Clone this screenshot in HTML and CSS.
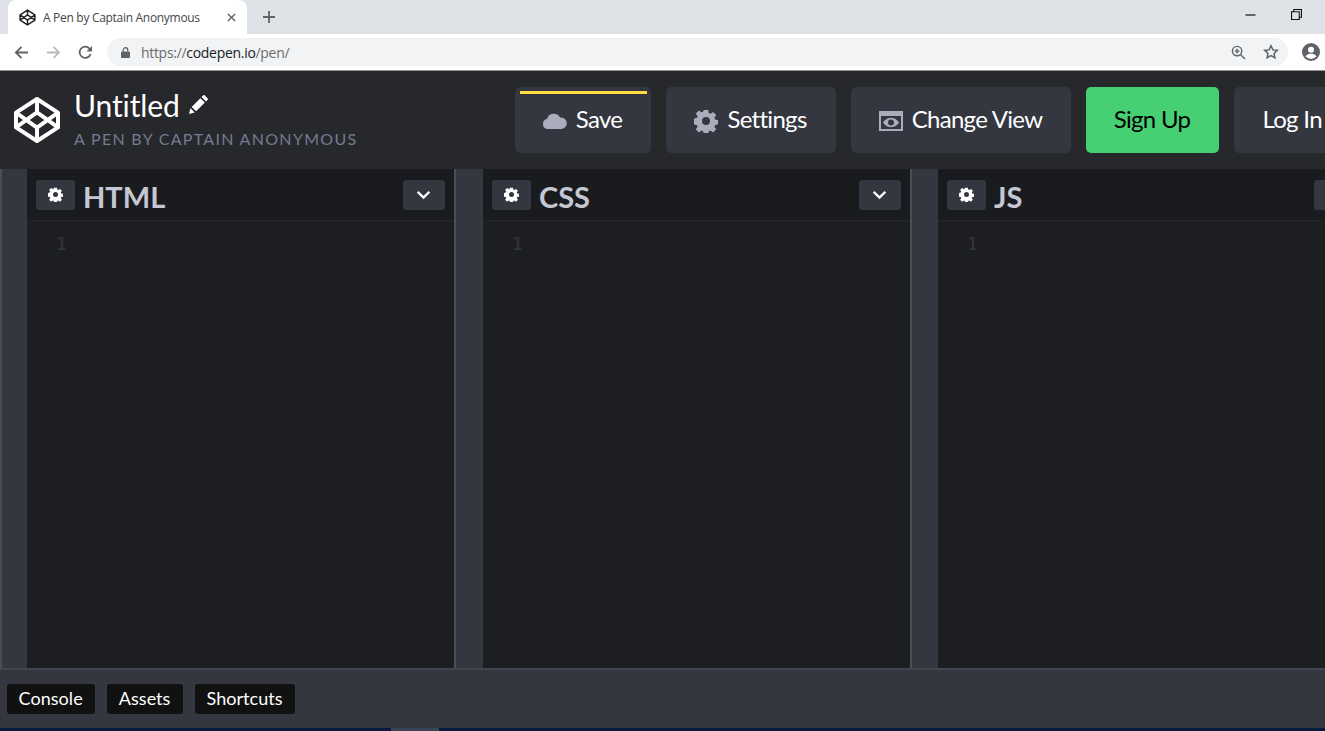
FILE: index.html
```html
<!DOCTYPE html>
<html lang="en">
<head>
<meta charset="utf-8">
<title>A Pen by Captain Anonymous</title>
<link rel="stylesheet" href="styles.css">
</head>
<body>
<svg class="defs" width="0" height="0" aria-hidden="true">
  <defs>
    <symbol id="gear" viewBox="0 0 24 24"><path fill-rule="evenodd" d="M9.800 1h4.400l.6 3.100 1.700.7 2.600-1.800 3.100 3.100-1.800 2.600.7 1.700 3 .6v4.400l-3 .6-.7 1.700 1.800 2.600-3.100 3.100-2.600-1.800-1.700.7-.6 3.100H9.800l-.6-3.100-1.700-.7-2.600 1.800-3.100-3.100 1.800-2.600-.7-1.700-3-.6V9.500l3-.6.7-1.700L1.800 4.600 4.900 1.500l2.600 1.800 1.700-.7zM12 8a4 4 0 1 0 0 8 4 4 0 0 0 0-8z"/></symbol>
    <symbol id="cp" viewBox="0 0 24 24"><path fill="none" stroke="currentColor" stroke-width="2" stroke-linejoin="round" d="M12 1.500 22.500 8.300v7.400L12 22.500 1.500 15.700V8.300zM12 1.500v6.700M12 15.800v6.700M1.500 8.300 12 15.800 22.500 8.300M1.500 15.700 12 8.200l10.500 7.500"/></symbol>
  </defs>
</svg>
<div class="tabstrip">
  <div class="tab">
    <svg class="tab-logo" viewBox="0 0 24 24"><use href="#cp"/></svg>
    <span class="tab-title">A Pen by Captain Anonymous</span>
    <svg class="tab-close" viewBox="0 0 10 10"><path d="M1 1l8 8M9 1l-8 8"/></svg>
  </div>
  <svg class="tab-new" viewBox="0 0 12 12"><path d="M6 0v12M0 6h12"/></svg>
  <div class="win-controls">
    <svg class="win-min" viewBox="0 0 10 2"><path d="M0 1h10"/></svg>
    <svg class="win-restore" viewBox="0 0 10 10"><path d="M0.500 2.500h7v7h-7zM2.500 2.500v-2h7v7h-2"/></svg>
  </div>
</div>
<div class="toolbar">
  <svg class="nav nav-back" viewBox="0 0 16 16"><path d="M15 8H2M8 2 2 8l6 6"/></svg>
  <svg class="nav nav-fwd" viewBox="0 0 16 16"><path d="M1 8h13M8 2l6 6-6 6"/></svg>
  <svg class="nav nav-reload" viewBox="0 0 16 16"><path d="M13.500 9.500A6 6 0 1 1 12.300 3.800L14 5.500"/><path class="solid" d="M15 1v6H9z"/></svg>
  <div class="omnibox">
    <svg class="lock" viewBox="0 0 10 12"><path d="M1 5h8a1 1 0 0 1 1 1v5a1 1 0 0 1-1 1H1a1 1 0 0 1-1-1V6a1 1 0 0 1 1-1z"/><path class="shackle" d="M2.500 5V3.200a2.500 2.500 0 0 1 5 0V5"/></svg>
    <span class="url"><span class="url-dim">https://</span>codepen.io<span class="url-dim">/pen/</span></span>
    <svg class="omni-icon" viewBox="0 0 16 16"><circle cx="6.500" cy="6.500" r="5"/><path d="M10.300 10.300 15 15M4 6.500h5M6.500 4v5"/></svg>
    <svg class="omni-icon omni-star" viewBox="0 0 16 16"><path d="M8 1.800l1.900 4.100 4.400.5-3.300 3 .9 4.400L8 11.600l-3.900 2.200.9-4.400-3.300-3 4.400-.5z"/></svg>
  </div>
  <svg class="avatar" viewBox="0 0 18 18"><circle cx="9" cy="9" r="9" class="av-bg"/><circle cx="9" cy="6.800" r="3" class="av-fg"/><path class="av-fg" d="M3.500 13.200C5 11.300 7 10.800 9 10.800s4 .5 5.500 2.400A7 7 0 0 1 9 16a7 7 0 0 1-5.500-2.800z"/></svg>
</div>
<header class="header">
  <svg class="logo" viewBox="0 0 24 24"><use href="#cp"/></svg>
  <div class="title-block">
    <div class="title-row">
      <span class="title">Untitled</span>
      <svg class="pencil" viewBox="0 0 20 20"><path d="M0 20l1.500-6L6 18.500zM2.800 12.500 12 3.300l4.700 4.700-9.200 9.200zM13.200 2.100 15 .3a1 1 0 0 1 1.400 0l3.300 3.300a1 1 0 0 1 0 1.400L17.900 6.800z"/></svg>
    </div>
    <div class="subtitle">A Pen by Captain Anonymous</div>
  </div>
  <div class="actions">
    <button class="btn btn-save">
      <svg class="btn-icon" viewBox="0 0 24 16"><path d="M5 16a5 5 0 0 1-1-9.900A7 7 0 0 1 17 4.500 5.800 5.800 0 0 1 19 16z"/></svg>Save
    </button>
    <button class="btn btn-settings"><svg class="btn-icon btn-gear"><use href="#gear"/></svg>Settings</button>
    <button class="btn btn-view">
      <svg class="btn-icon btn-eye" viewBox="0 0 24 20"><path fill-rule="evenodd" d="M0 0h24v20H0zM2 5v13h20V5zM12 6.800c4 0 7 3 8 4.700-1 1.800-4 4.700-8 4.700s-7-3-8-4.700c1-1.700 4-4.700 8-4.700zM12 8.500a3 3 0 1 0 0 6 3 3 0 0 0 0-6z"/></svg>Change View
    </button>
    <button class="btn btn-signup">Sign Up</button>
    <button class="btn btn-login">Log In</button>
  </div>
</header>
<main class="editors">
  <section class="col col-first">
    <div class="handle"></div>
    <div class="editor">
      <div class="ed-head">
        <span class="ed-btn ed-gear"><svg class="gear-sm"><use href="#gear"/></svg></span>
        <h2 class="ed-name">HTML</h2>
        <span class="ed-btn ed-chev"><svg class="chev" viewBox="0 0 14 9"><path d="M1.500 1.500 7 7l5.500-5.500"/></svg></span>
      </div>
      <div class="gutter">1</div>
    </div>
  </section>
  <section class="col">
    <div class="handle"></div>
    <div class="editor">
      <div class="ed-head">
        <span class="ed-btn ed-gear"><svg class="gear-sm"><use href="#gear"/></svg></span>
        <h2 class="ed-name">CSS</h2>
        <span class="ed-btn ed-chev"><svg class="chev" viewBox="0 0 14 9"><path d="M1.500 1.500 7 7l5.500-5.500"/></svg></span>
      </div>
      <div class="gutter">1</div>
    </div>
  </section>
  <section class="col col-last">
    <div class="handle"></div>
    <div class="editor">
      <div class="ed-head">
        <span class="ed-btn ed-gear"><svg class="gear-sm"><use href="#gear"/></svg></span>
        <h2 class="ed-name">JS</h2>
        <span class="ed-btn ed-chev"><svg class="chev" viewBox="0 0 14 9"><path d="M1.500 1.500 7 7l5.500-5.500"/></svg></span>
      </div>
      <div class="gutter">1</div>
    </div>
  </section>
</main>
<footer class="footer">
  <button class="foot-btn">Console</button>
  <button class="foot-btn">Assets</button>
  <button class="foot-btn">Shortcuts</button>
</footer>
<div class="taskbar"><span class="taskbar-mark"></span></div>
</body>
</html>
```

FILE: styles.css
```css
* { box-sizing: border-box; }
html, body { margin: 0; height: 100%; }
body {
  width: 1325px;
  height: 731px;
  overflow: hidden;
  display: flex;
  flex-direction: column;
  font-family: Lato, "Liberation Sans", sans-serif;
  background: #26282c;
}
.defs { position: absolute; }

/* Browser chrome */
.tabstrip {
  height: 34px;
  flex: none;
  display: flex;
  align-items: flex-end;
  padding-left: 8px;
  background: #dee1e6;
}
.tab {
  width: 239px;
  height: 34px;
  display: flex;
  align-items: center;
  padding: 0 11px;
  background: #fff;
  border-radius: 8px 8px 0 0;
  color: #45474a;
}
.tab-logo { width: 17px; height: 17px; color: #222; flex: none; }
.tab-title { margin-left: 7px; flex: 1; font: 12px "Open Sans", "Liberation Sans", sans-serif; letter-spacing: -.3px; color: #45474a; white-space: nowrap; }
.tab-close { width: 9px; height: 9px; fill: none; stroke: #5f6368; stroke-width: 1.600; }
.tab-new { width: 12px; height: 12px; margin: 0 0 11px 16px; fill: none; stroke: #5f6368; stroke-width: 1.800; }
.win-controls { margin-left: auto; align-self: flex-start; display: flex; align-items: center; gap: 35px; padding: 9px 23px 0 0; }
.win-min { width: 11px; height: 2px; fill: none; stroke: #111; stroke-width: 1.200; }
.win-restore { width: 11px; height: 11px; fill: none; stroke: #111; stroke-width: 1; }

.toolbar {
  height: 36px;
  flex: none;
  display: flex;
  align-items: center;
  padding: 0 5px 0 14px;
  background: #fff;
  border-bottom: 0;
}
.nav { width: 15px; height: 15px; fill: none; stroke: #5f6368; stroke-width: 1.900; margin-right: 17px; }
.nav-fwd { stroke: #b8babd; }
.nav-reload .solid { fill: #5f6368; stroke: none; }
.nav-reload { margin-right: 14px; }
.omnibox {
  width: 1182px;
  height: 28px;
  display: flex;
  align-items: center;
  padding: 0 9px 0 14px;
  background: #f1f3f4;
  border-radius: 14px;
}
.lock { width: 9px; height: 11px; fill: #5f6368; margin-right: 11px; }
.lock .shackle { fill: none; stroke: #5f6368; stroke-width: 1.400; }
.url { flex: 1; font: 14px "Open Sans", "Liberation Sans", sans-serif; letter-spacing: -.3px; color: #202124; }
.url-dim { color: #6a6d70; }
.omni-icon { width: 15px; height: 15px; fill: none; stroke: #5f6368; stroke-width: 1.500; margin-left: 17px; }
.omni-star { width: 16px; height: 16px; }
.avatar { width: 18px; height: 18px; margin-left: 14px; flex: none; }
.av-bg { fill: #5f6368; }
.av-fg { fill: #fff; }

/* Pen header */
.header {
  height: 99px;
  flex: none;
  display: flex;
  align-items: center;
  padding: 0 0 0 13px;
  overflow: hidden;
  background: #26282c;
  border-top: 1px solid #8f9092;
}
.logo { width: 48px; height: 48px; color: #fff; flex: none; }
.title-block { margin: -6px 0 0 13px; flex: none; }
.title-row { display: flex; align-items: center; height: 36px; }
.title { font-size: 30px; color: #fff; line-height: 36px; letter-spacing: -.1px; }
.pencil { width: 19px; height: 19px; margin-left: 9px; fill: #fff; }
.subtitle { margin-top: 7px; font-size: 16px; line-height: 18px; letter-spacing: 1.300px; text-transform: uppercase; color: #757b92; white-space: nowrap; }
.actions { margin-left: 157px; display: flex; gap: 15px; flex: none; }
.btn {
  height: 66px;
  display: flex;
  align-items: center;
  justify-content: center;
  padding: 0 0 4px;
  border: 0;
  border-radius: 5px;
  background: #343640;
  color: #fff;
  font: 24px Lato, "Liberation Sans", sans-serif;
  letter-spacing: -.7px;
}
.btn-icon { fill: #aaaebc; flex: none; margin: 6px 9px 0 0; }
.btn-save {
  position: relative;
  width: 136px;
}
.btn-save::before {
  content: "";
  position: absolute;
  top: 4px;
  left: 5px;
  right: 4px;
  height: 3px;
  background: #ffdd40;
}
.btn-save .btn-icon { width: 24px; height: 16px; }
.btn-settings { width: 170px; }
.btn-gear { width: 24px; height: 24px; }
.btn-view { width: 220px; }
.btn-eye { width: 24px; height: 20px; }
.btn-signup { width: 133px; background: #47cf73; color: #000; }
.btn-login { width: 120px; justify-content: flex-start; padding-left: 29px; }

/* Editors */
.editors {
  flex: 1;
  min-height: 0;
  display: flex;
  overflow: hidden;
  background: #343640;
}
.col { width: 456px; flex: none; display: flex; }
.col-first { width: 454px; }
.col-last { width: 455px; }
.handle {
  width: 29px;
  flex: none;
  background: #343640;
  border-left: 2px solid #4b4d57;
}
.col-first .handle { width: 27px; }
.col-last .handle { width: 28px; }
.editor { flex: 1; min-width: 0; display: flex; flex-direction: column; background: #1d1e22; }
.ed-head {
  height: 52px;
  flex: none;
  display: flex;
  align-items: center;
  padding: 0 9px;
  background: #1a1b1f;
  border-bottom: 1px solid #25262a;
}
.ed-btn {
  height: 30px;
  display: flex;
  align-items: center;
  justify-content: center;
  flex: none;
  border-radius: 3px;
  background: #343640;
}
.ed-gear { width: 39px; }
.gear-sm { width: 15px; height: 15px; fill: #fff; margin: -1px 1px 0 0; }
.ed-chev { width: 42px; margin-left: auto; }
.chev { width: 15px; height: 10px; fill: none; stroke: #fff; stroke-width: 2.200; margin-right: 2px; }
.ed-name { margin: 4px 0 0 8px; font-size: 29px; font-weight: 700; line-height: 36px; color: #c5c8d4; }
.gutter { padding: 13px 0 0 29px; font: 18px/20px "DejaVu Sans Mono", "Liberation Mono", monospace; color: #34363e; }

/* Footer */
.footer {
  height: 60px;
  flex: none;
  display: flex;
  align-items: center;
  gap: 12px;
  padding: 0 0 0 7px;
  background: #343640;
  border-top: 2px solid #42444e;
}
.foot-btn {
  height: 30px;
  padding: 0 12.500px 2px 11.500px;
  border: 0;
  border-radius: 3px;
  background: #111;
  color: #fff;
  font: 18px Lato, "Liberation Sans", sans-serif;
  letter-spacing: .05px;
}
.taskbar { height: 3px; flex: none; padding-left: 391px; background: #071a3c; }
.taskbar-mark { display: block; width: 48px; height: 3px; background: #3a4258; }
```
